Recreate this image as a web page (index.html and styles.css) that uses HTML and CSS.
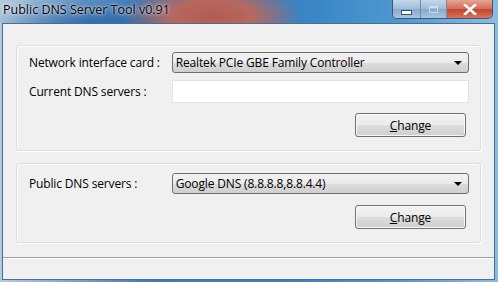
FILE: index.html
```html
<!DOCTYPE html>
<html lang="en">
<head>
    <meta charset="UTF-8">
    <title>Public DNS Server Tool v0.91</title>
    <link rel="stylesheet" href="styles.css">
</head>
<body>
    <div class="window">
        <div class="titlebar">
            <span class="title">Public DNS Server Tool v0.91</span>
            <div class="caption-buttons">
                <span class="cap cap-min"><i></i></span>
                <span class="cap cap-max"><i></i></span>
                <span class="cap cap-close">
                    <svg width="14" height="11" viewBox="0 0 14 11">
                        <path d="M2 1 L12 10 M12 1 L2 10" stroke="#fff" stroke-width="2.6" stroke-linecap="square"/>
                    </svg>
                </span>
            </div>
        </div>
        <div class="client">
            <div class="content">
                <section class="group group-nic">
                    <div class="row">
                        <label class="label">Network interface card :</label>
                        <div class="combo">
                            <span>Realtek PCIe GBE Family Controller</span>
                            <span class="arrow"></span>
                        </div>
                    </div>
                    <div class="row">
                        <label class="label">Current DNS servers :</label>
                        <input type="text" class="textbox">
                    </div>
                    <div class="actions">
                        <button class="btn"><u>C</u>hange</button>
                    </div>
                </section>
                <section class="group group-public">
                    <div class="row">
                        <label class="label">Public DNS servers :</label>
                        <div class="combo">
                            <span>Google DNS (8.8.8.8,8.8.4.4)</span>
                            <span class="arrow"></span>
                        </div>
                    </div>
                    <div class="actions">
                        <button class="btn"><u>C</u>hange</button>
                    </div>
                </section>
            </div>
            <div class="statusbar"></div>
        </div>
    </div>
</body>
</html>
```

FILE: styles.css
```css
html, body {
    margin: 0;
    padding: 0;
}
body {
    width: 498px;
    height: 282px;
    overflow: hidden;
    font-family: "Open Sans", "Noto Sans", sans-serif;
    font-size: 12px;
    letter-spacing: -0.15px;
    color: #000;
}
.window {
    width: 498px;
    height: 282px;
    display: flex;
    flex-direction: column;
    background: linear-gradient(90deg, #b3cbe0 0%, #86acd0 12%, #3a7bb8 30%, #3783c4 60%, #4f98d0 80%, #8cbce0 100%);
}
.titlebar {
    height: 23px;
    display: flex;
    justify-content: space-between;
    align-items: flex-start;
    flex-shrink: 0;
    background:
        radial-gradient(90px 34px at 212px 16px, #b25c52 0%, #b8685e 45%, rgba(170, 100, 110, 0) 100%),
        radial-gradient(110px 40px at 95px 30px, rgba(35, 95, 165, 0.95), rgba(35, 95, 165, 0) 100%);
}
.title {
    padding: 3px 0 0 3px;
    font-size: 12.5px;
    letter-spacing: 0;
    line-height: 14px;
    color: #000;
    text-shadow: 0 0 5px rgba(255, 255, 255, 0.8), 0 0 2px rgba(255, 255, 255, 0.8);
}
.caption-buttons {
    display: flex;
    margin-right: 5px;
    border: 1px solid #3c5a78;
    border-top: none;
    border-radius: 0 0 5px 5px;
    overflow: hidden;
    height: 18px;
}
.cap {
    display: flex;
    align-items: center;
    justify-content: center;
    height: 18px;
    background: linear-gradient(#c4d7ea, #9fbbd8 50%, #86a8cc 51%, #a9c6e3);
}
.cap-min {
    width: 27px;
    border-right: 1px solid #6f8dab;
}
.cap-min i {
    display: block;
    width: 9px;
    height: 3px;
    margin-top: 6px;
    background: #fff;
    border: 1px solid #384f66;
}
.cap-max {
    width: 25px;
    border-right: 1px solid #6f8dab;
}
.cap-max i {
    display: block;
    width: 7px;
    height: 5px;
    border: 1px solid #dce7f1;
    box-shadow: inset 0 1px 0 #dce7f1;
    opacity: 0.8;
}
.cap-close {
    width: 45px;
    background: linear-gradient(#e8a493, #d36c55 50%, #c2442b 51%, #d8735c);
}
.client {
    flex: 1;
    margin: 0 3px 2px 2px;
    border: 1px solid #4d6d8c;
    background: #f0f0f0;
    display: flex;
    flex-direction: column;
}
.content {
    flex: 1;
    padding: 21px 13px 0 13px;
    display: flex;
    flex-direction: column;
    gap: 12px;
}
.group {
    border: 1px solid #d5dfe5;
    border-radius: 3px;
    box-shadow: inset 1px 1px 0 #fff, 1px 1px 0 #fff;
    padding: 6px 11px 0 11px;
    display: flex;
    flex-direction: column;
    gap: 7px;
}
.group-nic {
    height: 98px;
}
.group-public {
    height: 69px;
    padding-top: 9px;
    gap: 11px;
}
.row {
    display: flex;
    align-items: center;
}
.label {
    width: 143px;
    padding-left: 1px;
    white-space: nowrap;
}
.combo {
    width: 293px;
    height: 19px;
    padding: 0 0 0 3px;
    border: 1px solid #707070;
    border-radius: 3px;
    background: linear-gradient(#f2f2f2, #ebebeb 50%, #dddddd 51%, #cfcfcf);
    display: flex;
    align-items: center;
    justify-content: space-between;
    white-space: nowrap;
}
.arrow {
    width: 0;
    height: 0;
    margin-right: 6px;
    border-left: 4px solid transparent;
    border-right: 4px solid transparent;
    border-top: 4px solid #000;
}
.textbox {
    width: 297px;
    height: 23px;
    margin: 0;
    padding: 0;
    box-sizing: border-box;
    border: 1px solid #e2e3ea;
    background: #fff;
}
.actions {
    display: flex;
    justify-content: flex-end;
    padding-right: 3px;
    margin-top: 3px;
}
.group-public .actions {
    margin-top: 0;
}
.btn {
    width: 111px;
    height: 24px;
    padding: 0;
    border: 1px solid #707070;
    border-radius: 3px;
    background: linear-gradient(#f2f2f2, #ebebeb 50%, #dddddd 51%, #cfcfcf);
    box-shadow: inset 0 0 0 1px rgba(255, 255, 255, 0.8);
    font-family: inherit;
    font-size: 12px;
    letter-spacing: -0.15px;
    color: #000;
}
.statusbar {
    height: 21px;
    border-top: 1px solid #a0a0a0;
    box-shadow: inset 0 1px 0 #fff;
    background: #f0f0f0;
}
```
